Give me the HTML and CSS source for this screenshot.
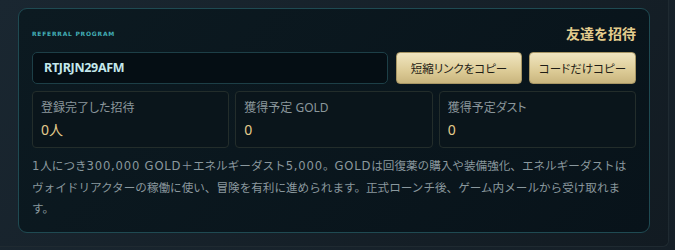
FILE: index.html
```html
<!DOCTYPE html>
<html lang="ja">

<head>
  <meta charset="utf-8">
  <title>友達を招待</title>
  <link rel="stylesheet" href="styles.css">
</head>
<body>

  <div class="panel">
    <div class="card">
      <div class="card-head">
        <span class="eyebrow">REFERRAL PROGRAM</span>
        <h2 class="title">友達を招待</h2>
      </div>

      <div class="code-row">
        <div class="code-box">RTJRJN29AFM</div>
        <button class="btn" type="button">短縮リンクをコピー</button>
        <button class="btn" type="button">コードだけコピー</button>
      </div>

      <div class="stats">
        <div class="stat">
          <p class="stat-label">登録完了した招待</p>
          <p class="stat-value">0人</p>
        </div>
        <div class="stat">
          <p class="stat-label">獲得予定 GOLD</p>
          <p class="stat-value">0</p>
        </div>
        <div class="stat">
          <p class="stat-label">獲得予定ダスト</p>
          <p class="stat-value">0</p>
        </div>
      </div>

      <p class="note"><span class="num">1</span>人につき<span class="num">300,000 GOLD</span>＋エネルギーダスト<span class="num">5,000</span>。<span class="num">GOLD</span>は回復薬の購入や装備強化、エネルギーダストはヴォイドリアクターの稼働に使い、冒険を有利に進められます。正式ローンチ後、ゲーム内メールから受け取れます。</p>
    </div>
  </div>

</body>
</html>
```

FILE: styles.css
```css
html, body {
  margin: 0;
  padding: 0;
}
body {
  background: linear-gradient(135deg, #1b2832 0%, #151f27 100%);
  font-family: "Noto Sans", "Noto Sans CJK JP", sans-serif;
  height: 250px;
  overflow: hidden;
}
.panel {
  width: 669px;
  height: 247px;
  border-right: 1px solid #1f2a31;
  border-bottom: 1px solid #1f2a31;
  border-bottom-right-radius: 6px;
  background: linear-gradient(135deg, #1a2731 0%, #121b22 100%);
  padding: 8px 0 0 18px;
  box-sizing: border-box;
}
.card {
  width: 632px;
  height: 225px;
  box-sizing: border-box;
  border: 1px solid #1f4a52;
  border-radius: 9px;
  background: linear-gradient(135deg, #0c1a21 0%, #08131a 100%);
  padding: 14px 13px 0 13px;
}
.card-head {
  display: flex;
  justify-content: space-between;
  align-items: center;
  height: 20px;
  margin-bottom: 9px;
}
.eyebrow {
  font-family: "DejaVu Sans", sans-serif;
  font-size: 6px;
  font-weight: bold;
  letter-spacing: 0.75px;
  color: #43aeb6;
  margin-top: 1px;
}
.title {
  margin: 0;
  font-size: 14px;
  font-weight: bold;
  color: #e4cd8e;
}
.code-row {
  display: flex;
  gap: 7px;
  height: 32px;
}
.code-box {
  flex: 1;
  margin-right: 1px;
  background: #050e14;
  border: 1px solid #1d3f47;
  border-radius: 5px;
  color: #c4e8ec;
  font-size: 12.5px;
  font-weight: bold;
  letter-spacing: -0.3px;
  line-height: 30px;
  padding: 0 11px;
}
.btn {
  font-family: "Noto Sans", "Noto Sans CJK JP", sans-serif;
  font-feature-settings: "palt";
  font-size: 11.5px;
  color: #1f1d16;
  background: linear-gradient(180deg, #f0e5c0 0%, #dccb96 60%, #c9b57e 100%);
  border: 1px solid #a89664;
  border-radius: 4px;
  padding: 0;
  height: 32px;
}
.btn:nth-of-type(1) {
  width: 126px;
}
.btn:nth-of-type(2) {
  width: 107px;
}
.stats {
  display: grid;
  grid-template-columns: 1fr 1fr 1fr;
  gap: 6px;
  margin-top: 7px;
}
.stat {
  border: 1px solid #232d2b;
  border-radius: 4px;
  height: 57px;
  box-sizing: border-box;
  padding: 7px 8px 0 8px;
  background: #0a151b;
}
.stat-label {
  margin: 0;
  font-size: 12px;
  font-feature-settings: "palt";
  line-height: 18px;
  color: #8b979b;
}
.stat-value {
  margin: 3px 0 0 0;
  font-size: 14px;
  line-height: 20px;
  color: #e3cb8c;
}
.note {
  margin: 8px 0 0 0;
  font-family: "DejaVu Sans", "Noto Sans CJK JP", sans-serif;
  font-size: 11.6px;
  line-height: 21.5px;
  color: #8a989e;
}
.note .num {
  letter-spacing: 0.8px;
}
```
